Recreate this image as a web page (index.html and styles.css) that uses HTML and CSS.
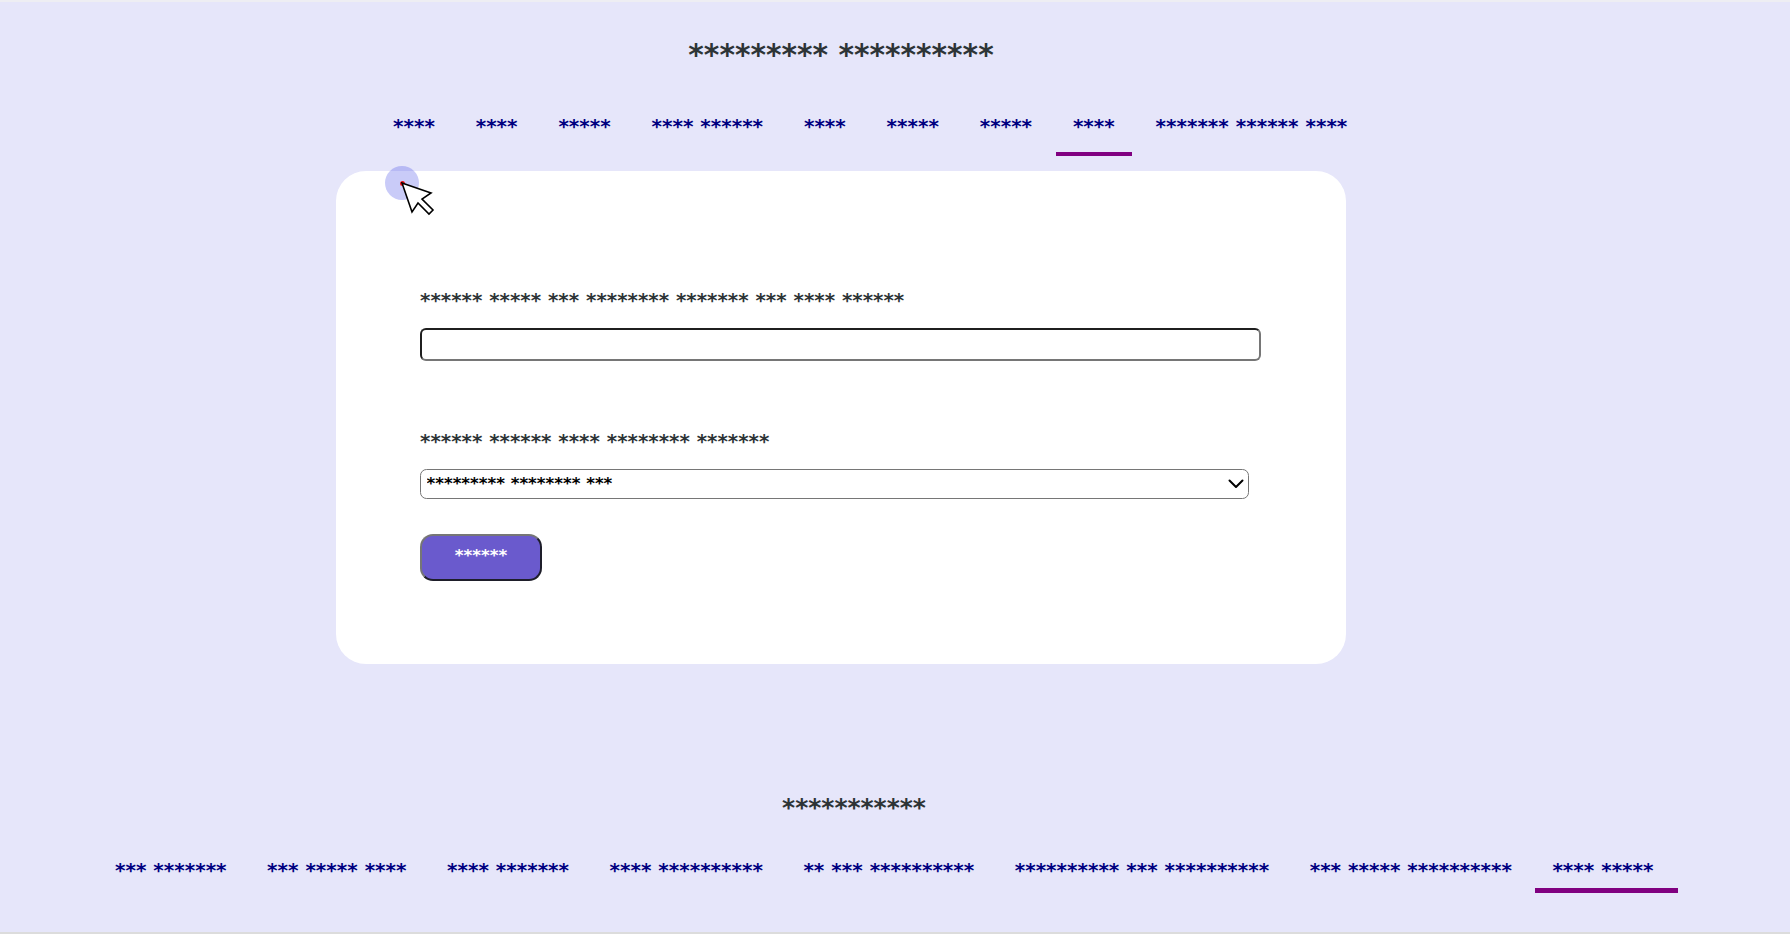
FILE: index.html
```html
<!DOCTYPE html>
<html lang="en">
<head>
<meta charset="utf-8">
<title>Form</title>
<link rel="stylesheet" href="styles.css">
</head>
<body>
<div class="strip-top"></div>
<div class="page">
  <div class="main">
    <h2 class="title">********* **********</h2>
    <nav class="topnav">
      <a href="#">****</a>
      <a href="#">****</a>
      <a href="#">*****</a>
      <a href="#">**** ******</a>
      <a href="#">****</a>
      <a href="#">*****</a>
      <a href="#">*****</a>
      <a href="#" class="active">****</a>
      <a href="#">******* ****** ****</a>
    </nav>
    <section class="card">
      <form class="form">
        <label class="field-label" for="f1">****** ***** *** ******** ******* *** **** ******</label>
        <input id="f1" class="text-input" type="text">
        <label class="field-label second" for="f2">****** ****** **** ******** *******</label>
        <div class="select-wrap">
          <select id="f2" class="select"><option>********* ******** ***</option></select>
          <svg class="chev" width="16" height="10" viewBox="0 0 16 10"><path d="M1.5 1.5 L8 8 L14.5 1.5" fill="none" stroke="#000" stroke-width="2" stroke-linecap="round" stroke-linejoin="round"/></svg>
        </div>
        <button class="submit" type="button">******</button>
      </form>
    </section>
  </div>
  <footer class="footer">
    <h3 class="footer-title">***********</h3>
    <nav class="bottomnav">
      <a href="#">*** *******</a>
      <a href="#">*** ***** ****</a>
      <a href="#">**** *******</a>
      <a href="#">**** **********</a>
      <a href="#">** *** **********</a>
      <a href="#">********** *** **********</a>
      <a href="#">*** ***** **********</a>
      <a href="#" class="active last">**** *****</a>
    </nav>
  </footer>
</div>
<div class="strip-bottom"></div>

<div class="cursor-ring"><span class="cursor-dot"></span></div>
<svg class="cursor-arrow" width="36" height="36" viewBox="0 0 36 36"><path d="M1 1 L30 11 L21 17 L32 28 L28 32 L17 21 L11 30 Z" fill="#fff" stroke="#000" stroke-width="1.6" stroke-linejoin="miter"/></svg>
</body>
</html>
```

FILE: styles.css
```css
html {
  background: #dcdcdc;
}

body {
  margin: 0;
  font-family: "DejaVu Sans", Verdana, sans-serif;
  position: relative;
}

.strip-top {
  height: 2px;
  background: #eeeef3;
}

.page {
  height: 930px;
  background: #e6e6fa;
  overflow: hidden;
}

.strip-bottom {
  height: 2px;
  background: #dcdcdc;
}

.main {
  width: 1010px;
  margin-left: 336px;
}

.title {
  margin: 0;
  padding-top: 34px;
  font-size: 29.7px;
  line-height: 37px;
  font-weight: bold;
  color: #2d3436;
  text-align: center;
}

.topnav {
  display: flex;
  gap: 6.85px;
  margin-left: 40px;
  margin-top: 31.5px;
  width: max-content;
}

.topnav a,
.bottomnav a {
  font-size: 20px;
  line-height: 25px;
  font-weight: bold;
  color: #000080;
  text-decoration: none;
  white-space: nowrap;
}

.topnav a {
  padding: 9px 17px 13.5px;
  border-bottom: 4px solid transparent;
}

.topnav a.active {
  border-bottom-color: #800080;
}

.card {
  margin-top: 15px;
  background: #fff;
  border-radius: 30px;
  padding: 117px 0 83px 84px;
}

.form {
  display: flex;
  flex-direction: column;
  align-items: flex-start;
}

.field-label {
  font-size: 19.85px;
  line-height: 25px;
  font-weight: bold;
  color: #2d3436;
}

.field-label.second {
  margin-top: 67.5px;
}

.text-input {
  box-sizing: border-box;
  margin: 15px 0 0;
  width: 841px;
  height: 33px;
  border-style: solid;
  border-width: 2.6px;
  border-color: #1f1f1f #767676 #767676 #1f1f1f;
  border-radius: 6px;
  background: #fff;
  padding: 0 4px;
  font-size: 17px;
  font-family: inherit;
}

.select-wrap {
  position: relative;
  margin-top: 15.5px;
  width: 829px;
  height: 30px;
}

.select {
  appearance: none;
  -webkit-appearance: none;
  box-sizing: border-box;
  width: 100%;
  height: 30px;
  margin: 0;
  border: 1.3px solid #767676;
  border-radius: 6.5px;
  background: #fff;
  padding: 0 30px 2px 5.5px;
  font-family: "DejaVu Sans", sans-serif;
  font-size: 16.67px;
  font-weight: bold;
  color: #000;
}

.chev {
  position: absolute;
  right: 5px;
  top: 10px;
  pointer-events: none;
}

.submit {
  box-sizing: border-box;
  margin-top: 35px;
  width: 122px;
  height: 47px;
  background: #6a5acd;
  color: #fff;
  font-family: "DejaVu Sans", sans-serif;
  font-size: 16.67px;
  font-weight: bold;
  border-style: solid;
  border-width: 2.6px;
  border-color: #767676 #1e1e2a #1e1e2a #767676;
  border-radius: 13px;
  padding: 0 0 4px;
}

.footer {
  margin-top: 127.8px;
}

.footer-title {
  margin: 0;
  padding-right: 82px;
  font-size: 25px;
  line-height: 32px;
  font-weight: bold;
  color: #2d3436;
  text-align: center;
}

.bottomnav {
  display: flex;
  gap: 6.5px;
  padding-left: 98px;
  margin-top: 24px;
}

.bottomnav a {
  padding: 10px 17px 5px;
  border-bottom: 5px solid transparent;
}

.bottomnav a.last {
  padding-right: 25px;
}

.bottomnav a.active {
  border-bottom-color: #800080;
}

.cursor-ring {
  position: absolute;
  left: 385px;
  top: 166px;
  width: 34px;
  height: 34px;
  border-radius: 50%;
  background: rgba(60, 70, 230, 0.28);
  display: flex;
  align-items: center;
  justify-content: center;
}

.cursor-dot {
  width: 5px;
  height: 5px;
  border-radius: 50%;
  background: #ee1111;
}

.cursor-arrow {
  position: absolute;
  left: 401px;
  top: 182px;
}
```
